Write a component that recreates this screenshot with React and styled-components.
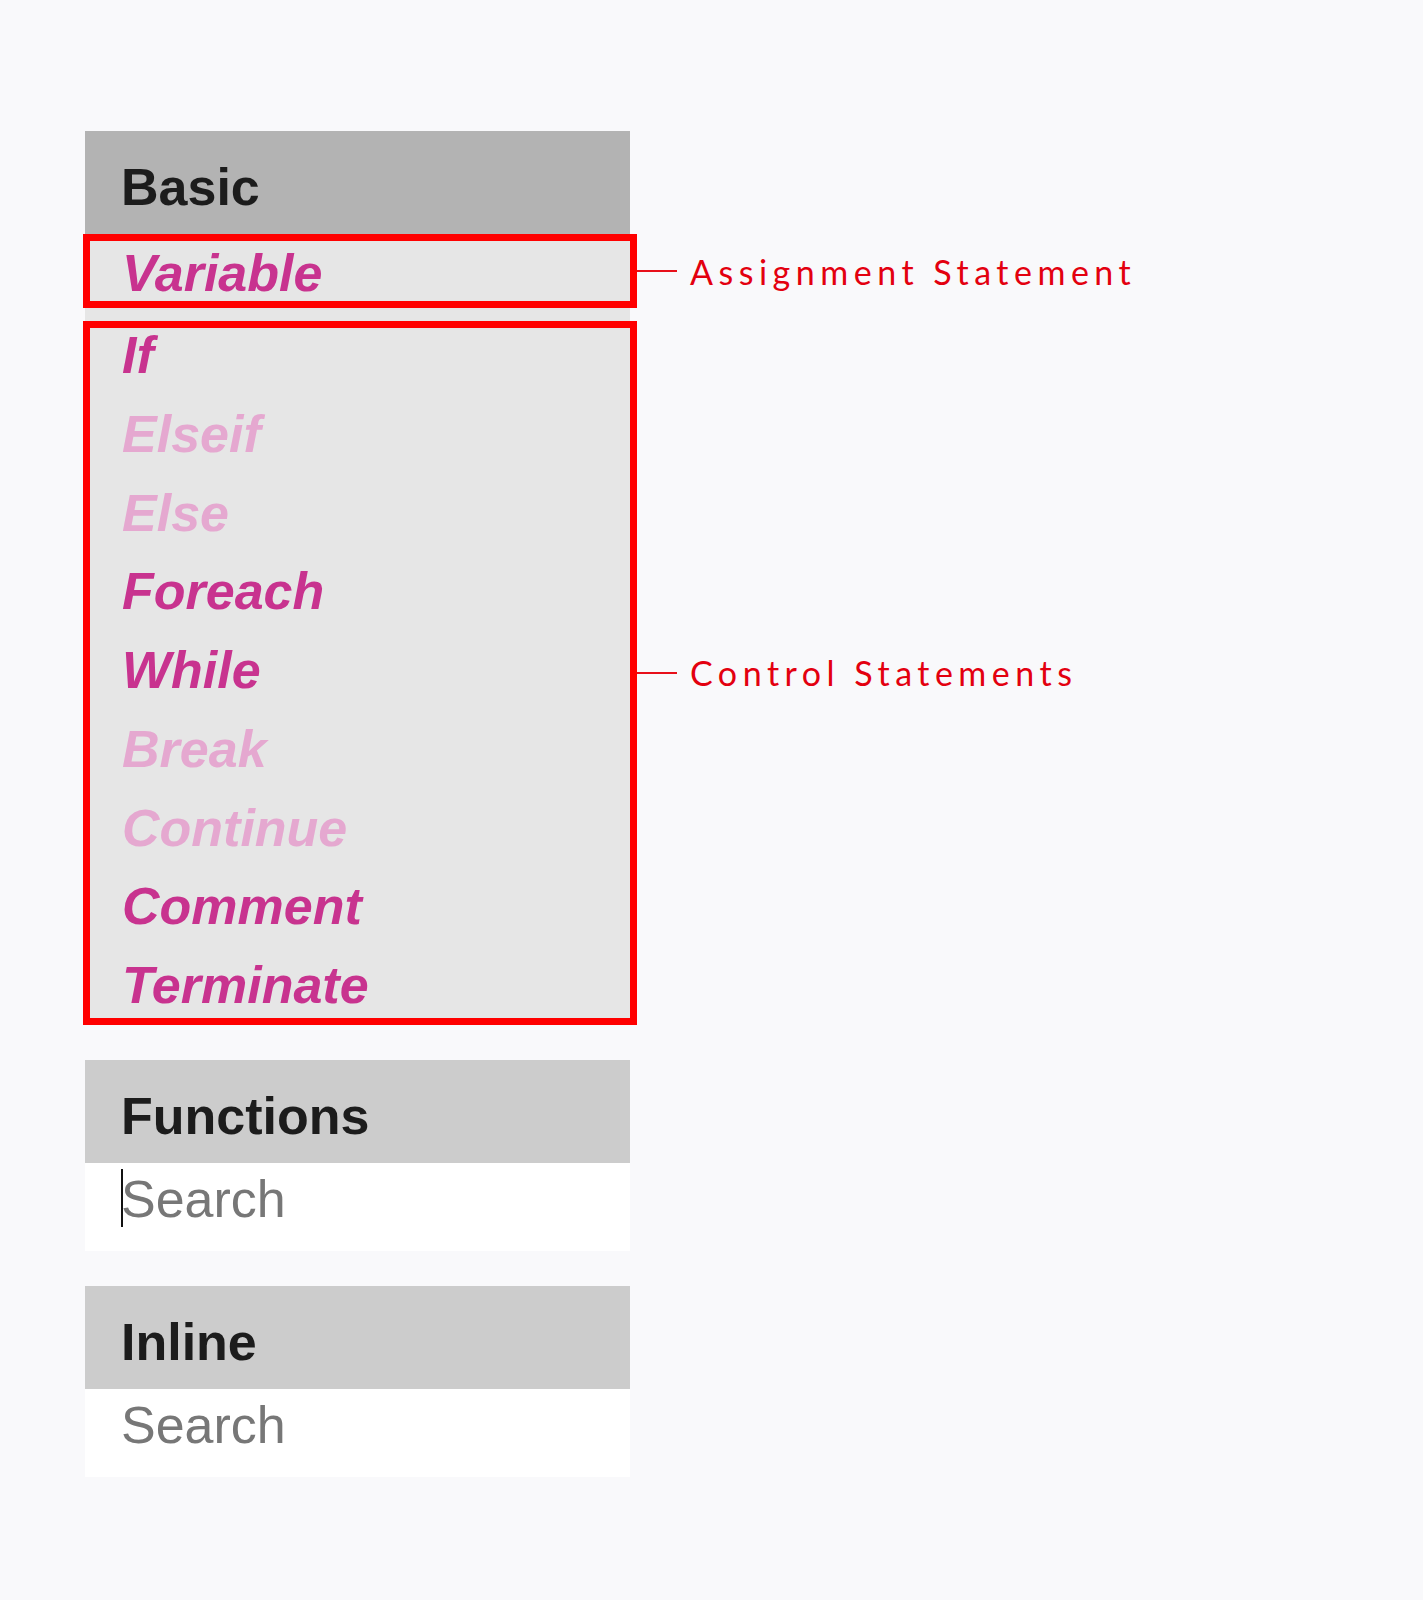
import React from 'react';
import styled, { createGlobalStyle } from 'styled-components';

const GlobalStyle = createGlobalStyle`
    html, body {
        margin: 0;
        background: #f9f9fb;
    }
    body {
        font-family: "Liberation Sans", Arial, sans-serif;
    }
`

const Page = styled.div`
    min-height: 1600px;
    box-sizing: border-box;
    padding: 131px 0 0 85px;
`

const Sidebar = styled.div`
    width: 545px;
    display: flex;
    flex-direction: column;
    gap: 35px;
`

const Panel = styled.section`
    display: flex;
    flex-direction: column;
    background: ${props => props.$body};
`

const PanelHeader = styled.h2`
    margin: 0;
    height: 103px;
    box-sizing: border-box;
    padding: 9px 0 0 36px;
    line-height: 94px;
    font-size: 52px;
    font-weight: 700;
    color: #1c1c1c;
    background: ${props => props.$dark ? '#b3b3b3' : '#cccccc'};
`

const BlockList = styled.div`
    display: flex;
    flex-direction: column;
    gap: 13px;
`

const GroupRow = styled.div`
    display: flex;
    align-items: center;
    width: max-content;
    margin-left: -2px;
`

const StatementBox = styled.div`
    width: 554px;
    box-sizing: border-box;
    border: 7px solid #ff0000;
    background: #e6e6e6;
    padding: ${props => props.$pad};
    display: flex;
    flex-direction: column;
    gap: 24.75px;
`

const Statement = styled.div`
    height: 54px;
    line-height: 54px;
    font-size: 52px;
    font-weight: 700;
    font-style: italic;
    color: ${props => props.$muted ? '#e5a8d0' : '#c8338f'};
`

const Connector = styled.span`
    width: 40px;
    height: 2px;
    background: #e8101a;
`

const Note = styled.span`
    margin-left: 13px;
    font-family: Lato, "Open Sans", sans-serif;
    font-size: 34px;
    letter-spacing: 5.5px;
    color: #e3000f;
    white-space: nowrap;
`

const SearchField = styled.div`
    display: flex;
    align-items: flex-start;
    height: 88px;
    padding-left: 36px;
    background: #fff;
`

const Caret = styled.span`
    width: 2px;
    height: 58px;
    margin: 6px -2px 0 0;
    background: #111;
    position: relative;
    z-index: 1;
`

const Placeholder = styled.span`
    font-size: 52px;
    line-height: 72px;
    color: #777;
`

const controls = [
    ['If', false],
    ['Elseif', true],
    ['Else', true],
    ['Foreach', false],
    ['While', false],
    ['Break', true],
    ['Continue', true],
    ['Comment', false],
    ['Terminate', false],
];

function SearchPanel({ title, focused }) {
    return (
        <Panel $body="#fff">
            <PanelHeader>{title}</PanelHeader>
            <SearchField>
                {focused && <Caret />}
                <Placeholder>Search</Placeholder>
            </SearchField>
        </Panel>
    );
}

export default function App() {
    return (
        <Page>
            <GlobalStyle />
            <Sidebar>
                <Panel $body="#e6e6e6">
                    <PanelHeader $dark>Basic</PanelHeader>
                    <BlockList>
                        <GroupRow>
                            <StatementBox $pad="5px 32px 1px">
                                <Statement>Variable</Statement>
                            </StatementBox>
                            <Connector />
                            <Note>Assignment Statement</Note>
                        </GroupRow>
                        <GroupRow>
                            <StatementBox $pad="0 32px 5.5px">
                                {controls.map(([name, muted]) => (
                                    <Statement key={name} $muted={muted}>{name}</Statement>
                                ))}
                            </StatementBox>
                            <Connector />
                            <Note>Control Statements</Note>
                        </GroupRow>
                    </BlockList>
                </Panel>
                <SearchPanel title="Functions" focused />
                <SearchPanel title="Inline" />
            </Sidebar>
        </Page>
    );
}
